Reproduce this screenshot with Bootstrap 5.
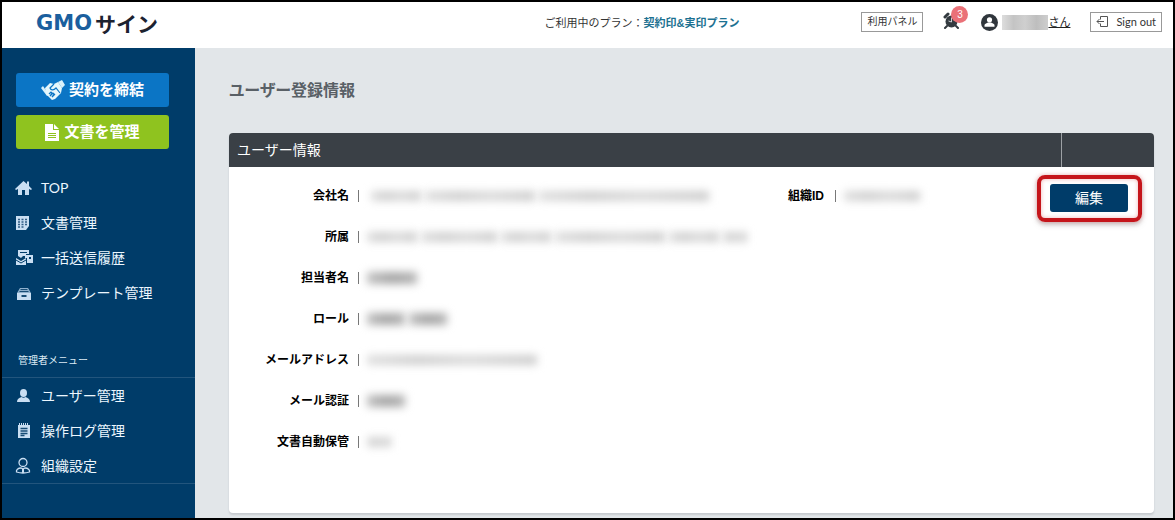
<!DOCTYPE html>
<html lang="ja">
<head>
<meta charset="utf-8">
<meta name="viewport" content="width=device-width, initial-scale=1">
<title>ユーザー登録情報 | GMOサイン</title>
<link href="https://cdn.jsdelivr.net/npm/bootstrap@5.3.0/dist/css/bootstrap.min.css" rel="stylesheet">
<style>
  :root { --navy: #003c69; --slate: #3a4046; --pale: #c9def2; }
  body { font-family: "Liberation Sans", "Noto Sans CJK JP", sans-serif; font-size: 14px; line-height: 20px; color: #111; background: #e2e6e9; border: 2px solid #000; }
  .site-header { min-height: 46px; padding: 0 11px 0 34px; }
  .site-header > * { flex-shrink: 0; }
  .brand { font: bold 21px/24px "DejaVu Sans", sans-serif; color: #1b5f9e; gap: 3px; margin-top: -4px; }
  .brand-kana { font-family: "Noto Sans CJK JP", sans-serif; color: #1c2230; }
  .plan { font-size: 11px; margin-right: 122px; margin-top: -4px; color: #333; }
  .plan a { color: #1c7191; }
  .tools { gap: 20px; margin-top: -6px; }
  .outline-btn { height: 20px; padding: 0 5px; font-size: 10px; line-height: 18px; color: #333; background: #fff; border: 1px solid #999; border-radius: 0; }
  .signout { font-family: Lato, sans-serif; font-size: 11px; gap: 7px; padding: 0 5px; }
  .alarm { width: 18px; height: 20px; }
  .alarm-count { top: -6px; left: 8px; width: 17px; height: 17px; font-size: 10px; line-height: 17px; background: #ea7178; color: #fff; }
  .account { font-size: 11px; color: #222; }
  .account-name { width: 46px; height: 15px; margin-left: 4px; background: linear-gradient(90deg, #ddd, #c4c4c4 25%, #cfcfcf 50%, #bebebe 75%, #cecece); }

  .sidebar { flex: 0 0 193px; background: var(--navy); }
  .actions { gap: 8px; padding: 25px 26px 21px 14px; }
  .action-btn { height: 34px; gap: 4px; padding: 0; border: 0; border-radius: 3px; color: #fff; font-size: 15px; font-weight: 700; line-height: 20px; }
  .action-btn:hover { color: #fff; }
  .sign { background: #0b75c5; }
  .manage { background: #8fc31f; }
  .side-list a { height: 35px; gap: 8px; padding-left: 13px; color: #ecf7ff; }
  .side-list svg { width: 18px; height: 18px; color: var(--pale); }
  .latin { font-family: Lato, sans-serif; }
  .side-label { font-size: 10px; line-height: 20px; padding: 41px 16px 6px; color: #dcebf5; }
  .admin-list { border-top: 1px solid #22557d; border-bottom: 1px solid #22557d; }

  .content { padding: 29px 19px 5px 34px; min-width: 0; }
  .page-title { font-size: 16px; line-height: 28px; font-weight: 700; font-feature-settings: "palt"; color: #596066; margin: 0 0 28px; }
  .panel { background: #fff; border-radius: 4px; box-shadow: 0 2px 2px #c6cacf; }
  .panel-head { height: 34px; background: var(--slate); color: #fff; border-radius: 4px 4px 0 0; }
  .panel-title { font-size: 14px; line-height: 34px; padding-left: 8px; font-weight: 400; }
  .panel-end { width: 93px; border-left: 1px solid #9da1a5; }
  .info { grid-template-columns: 60% 1fr auto; padding: 8px 0 51px; }
  .info-row { height: 41px; font-size: 12px; }
  .info-row dt { width: 120px; text-align: right; font-weight: 700; color: #000; }
  .info-row .dt-id { width: auto; padding: 0 2px 0 4px; }
  .info-row dd { margin: 0 0 0 9px; padding-left: 8px; border-left: 1px solid #777; height: 12px; display: flex; align-items: center; gap: 4px; }
  .redacted { height: 12px; filter: blur(4px); background: linear-gradient(90deg, #c0c0c0, #a4a4a4 50%, #b4b4b4); }
  .redacted.soft { height: 10px; background: linear-gradient(90deg, #dedede, #cfcfcf 30%, #dadada 60%, #cdcdcd); }
  .w-a { width: 24px; } .w-b { width: 38px; } .w-c { width: 50px; } .w-d { width: 76px; } .w-e { width: 110px; } .w-f { width: 170px; }
  .edit-wrap { margin: 9px 26px 0 0; height: 28px; }
  .edit-wrap::after { content: ""; position: absolute; inset: -9px -14px -10px -13px; border: 4px solid #c5151b; border-radius: 8px; box-shadow: 0 0 4px #e0757888, inset 0 0 4px #e0757888, 0 3px 5px #9998; pointer-events: none; }
  .edit-btn { width: 78px; height: 28px; padding: 0; border: 0; border-radius: 3px; background: var(--navy); color: #fff; font-size: 14px; line-height: 20px; }
</style>
</head>
<body class="min-vh-100 d-flex flex-column">
<header class="site-header bg-white d-flex align-items-center">
  <a href="#" class="brand d-flex align-items-center text-decoration-none"><span>GMO</span><span class="brand-kana">サイン</span></a>
  <div class="plan d-flex ms-auto"><span>ご利用中のプラン</span><span>：<a href="#" class="fw-bold text-decoration-none">契約印&amp;実印プラン</a></span></div>
  <div class="tools d-flex align-items-center">
    <button type="button" class="btn outline-btn">利用パネル</button>
    <a href="#" class="alarm position-relative" aria-label="お知らせ">
      <svg class="d-block" width="17" height="17" viewBox="0 0 17 17"><g fill="none" stroke="#333a40" stroke-linecap="round"><path d="M2 5 5 2M12 2l3 3" stroke-width="3"/><path d="m4 14-2 2M13 14l2 2" stroke-width="2"/></g><circle cx="8.500" cy="9.500" r="6" fill="#333a40"/><path d="M8.500 5.500V10l-3-1" fill="none" stroke="#cbd0d4"/></svg>
      <span class="alarm-count position-absolute rounded-circle text-center">3</span>
    </a>
    <a href="#" class="account d-flex align-items-center">
      <svg width="17" height="17" viewBox="0 0 17 17"><circle cx="8.500" cy="8.500" r="8.500" fill="#30363c"/><circle cx="8.500" cy="5.800" r="2.600" fill="#fff"/><path d="M3.500 12.800V11q0-1 1.500-1.500l2-1h3l2 1q1.500.5 1.500 1.500v1.800z" fill="#fff"/></svg>
      <span class="account-name" aria-hidden="true"></span><span>さん</span>
    </a>
    <button type="button" class="btn outline-btn signout d-flex align-items-center">
      <svg width="13" height="12" viewBox="0 0 13 12" fill="none" stroke="#555"><path d="M4.500 3.500v-3h7v10h-7v-3M1 5.500h7M3.500 3 1 5.500 3.500 8"/></svg>Sign out
    </button>
  </div>
</header>

<div class="d-flex flex-grow-1">
  <nav class="sidebar" aria-label="メインメニュー">
    <div class="actions d-flex flex-column">
      <button type="button" class="btn action-btn sign d-flex align-items-center justify-content-center">
        <svg width="24" height="22" viewBox="0 0 24 22"><path fill="#d9f1fb" d="m0 9 2-2 6 9-2 1zM17 3l4-2 3 5-3 3z"/><path fill="#e6f7fc" d="m4 9 5-5 4 1 4-2 4 6-1 5-6 6-3 1-6-6z"/><path fill="none" stroke="#0b75c5" stroke-width="1.200" d="m13 5-4 4c1 3 4 2 6 0l4 5M8 15l2-2 1 1-2 3 3-3 1 1-2 3 3-3"/></svg>
        <span>契約を締結</span>
      </button>
      <button type="button" class="btn action-btn manage d-flex align-items-center justify-content-center">
        <svg width="15" height="17" viewBox="0 0 15 17"><path fill="#fff" d="M0 0h8v6h6v11H0zM9 0l5 5H9z"/><path stroke="#8fc31f" d="M3 9.500h8M3 11.500h8M3 13.500h8"/></svg>
        <span>文書を管理</span>
      </button>
    </div>
    <ul class="side-list list-unstyled mb-0">
      <li><a href="#" class="latin d-flex align-items-center text-decoration-none"><svg viewBox="0 0 18 18" fill="currentColor"><path d="M8.500 2 0 10l1 1 2-1v6h4v-5h3v5h4v-6l2 1 1-1-3-3V2.500h-2V5z"/></svg>TOP</a></li>
      <li><a href="#" class="d-flex align-items-center text-decoration-none"><svg viewBox="0 0 18 18"><path fill="currentColor" d="M1 2h13v10l-3 4H1z"/><path stroke="#315d85" stroke-width="1.500" stroke-dasharray="2 1.500" d="M3 5.500h9M3 8h9M3 10.500h9M3 13h6"/></svg>文書管理</a></li>
      <li><a href="#" class="d-flex align-items-center text-decoration-none"><svg viewBox="0 0 18 18"><path fill="currentColor" d="M3 1h11v4h-3v2H8L6 9 3 7z"/><path fill="currentColor" d="M10 6h8v8h-6V9h-2z"/><path fill="currentColor" d="m1 9 5 3 5-3v7H1z"/><path fill="none" stroke="#003c69" d="M5 3.500h7M1 11l5 3 5-3"/><path fill="#003c69" d="M14 8h2v2h-2z"/></svg>一括送信履歴</a></li>
      <li><a href="#" class="d-flex align-items-center text-decoration-none"><svg viewBox="0 0 18 18"><path fill="#8fb1ce" d="M5 4h8l3 5H2z"/><path fill="currentColor" d="M2 9h14v7H2z"/><path fill="none" stroke="#174c75" d="M5.500 5.500h7M4.500 7.500h9"/><path stroke="#174c75" stroke-width="2" d="M6.500 12h5"/></svg>テンプレート管理</a></li>
    </ul>
    <div class="side-label">管理者メニュー</div>
    <ul class="side-list admin-list list-unstyled mb-0">
      <li><a href="#" class="d-flex align-items-center text-decoration-none"><svg viewBox="0 0 18 18" fill="currentColor"><ellipse cx="8.500" cy="6" rx="3.500" ry="4"/><path d="M2 15c0-3 2-4 4.500-5q2 1.500 4 0c2.500 1 4.500 2 4.500 5z"/></svg>ユーザー管理</a></li>
      <li><a href="#" class="d-flex align-items-center text-decoration-none"><svg viewBox="0 0 18 18"><path fill="currentColor" d="M3 3h12v13H3z"/><path stroke="currentColor" stroke-width="2" stroke-dasharray="1 1" d="M4 2h10"/><path stroke="#174c75" stroke-width="1.500" d="M5.500 6.500h7M5.500 9h7M5.500 11.500h7M5.500 13.500h4"/></svg>操作ログ管理</a></li>
      <li><a href="#" class="d-flex align-items-center text-decoration-none"><svg viewBox="0 0 18 18" fill="none" stroke="currentColor" stroke-width="1.300"><circle cx="8" cy="5.500" r="4"/><path d="M6 11c-3 0-5 2-4.500 4q6.500 2 13 0c.5-2-1.500-4-4.500-4l-2 1z"/><path d="M8 12v4" stroke-width="2"/></svg>組織設定</a></li>
    </ul>
  </nav>

  <main class="content flex-grow-1">
    <h1 class="page-title">ユーザー登録情報</h1>
    <section class="panel">
      <div class="panel-head d-flex">
        <h2 class="panel-title flex-grow-1 mb-0">ユーザー情報</h2>
        <div class="panel-end"></div>
      </div>
      <div class="info d-grid">
        <dl class="mb-0">
          <div class="info-row d-flex align-items-center"><dt>会社名</dt><dd><span class="redacted soft w-c ms-1"></span><span class="redacted soft w-e"></span><span class="redacted soft w-f"></span></dd></div>
          <div class="info-row d-flex align-items-center"><dt>所属</dt><dd><span class="redacted soft w-c"></span><span class="redacted soft w-d"></span><span class="redacted soft w-c"></span><span class="redacted soft w-e"></span><span class="redacted soft w-c"></span><span class="redacted soft w-a"></span></dd></div>
          <div class="info-row d-flex align-items-center"><dt>担当者名</dt><dd><span class="redacted w-c"></span></dd></div>
          <div class="info-row d-flex align-items-center"><dt>ロール</dt><dd><span class="redacted w-b"></span><span class="redacted w-b"></span></dd></div>
          <div class="info-row d-flex align-items-center"><dt>メールアドレス</dt><dd><span class="redacted soft w-f"></span></dd></div>
          <div class="info-row d-flex align-items-center"><dt>メール認証</dt><dd><span class="redacted w-b"></span></dd></div>
          <div class="info-row d-flex align-items-center"><dt>文書自動保管</dt><dd><span class="redacted soft w-a"></span></dd></div>
        </dl>
        <dl class="mb-0">
          <div class="info-row d-flex align-items-center"><dt class="dt-id">組織ID</dt><dd><span class="redacted soft w-d"></span></dd></div>
        </dl>
        <div class="edit-wrap position-relative">
          <button type="button" class="btn edit-btn">編集</button>
        </div>
      </div>
    </section>
  </main>
</div>
<script src="https://cdn.jsdelivr.net/npm/bootstrap@5.3.0/dist/js/bootstrap.bundle.min.js"></script>
</body>
</html>
